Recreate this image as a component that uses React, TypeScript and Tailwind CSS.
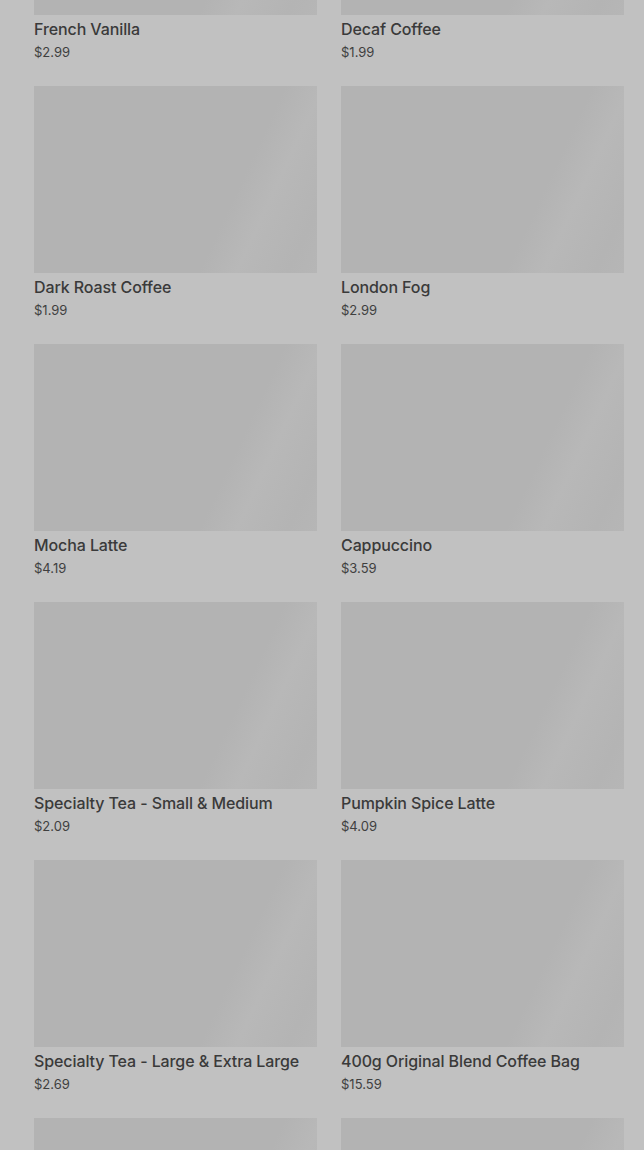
import React from "react";

const items: [string, string][] = [
  ["French Vanilla", "$2.99"],
  ["Decaf Coffee", "$1.99"],
  ["Dark Roast Coffee", "$1.99"],
  ["London Fog", "$2.99"],
  ["Mocha Latte", "$4.19"],
  ["Cappuccino", "$3.59"],
  ["Specialty Tea - Small & Medium", "$2.09"],
  ["Pumpkin Spice Latte", "$4.09"],
  ["Specialty Tea - Large & Extra Large", "$2.69"],
  ["400g Original Blend Coffee Bag", "$15.59"],
  ["", ""],
  ["", ""],
];

export default function App() {
  return (
    <div className="h-[1150px] w-full overflow-hidden bg-[#c1c1c1]" style={{ fontFamily: "Inter, 'Noto Sans', sans-serif" }}>
      <div className="-mt-[172px] grid grid-cols-[283px_283px] gap-x-[24px] gap-y-[23px] pl-[34px]">
        {items.map(([name, price], i) => (
          <div key={i} className="flex flex-col">
            <div className="h-[187px] w-full bg-[linear-gradient(115deg,#b3b3b3_0%,#b3b3b3_68%,#b8b8b8_78%,#b4b4b4_92%,#b6b6b6_100%)]" />
            <div className="mt-[2px] text-[16px] font-medium leading-[24px] text-[#3a3a3a] tracking-[-0.1px]">{name}</div>
            <div className="text-[13px] leading-[22px] text-[#3f3f3f]">{price}</div>
          </div>
        ))}
      </div>
    </div>
  );
}
